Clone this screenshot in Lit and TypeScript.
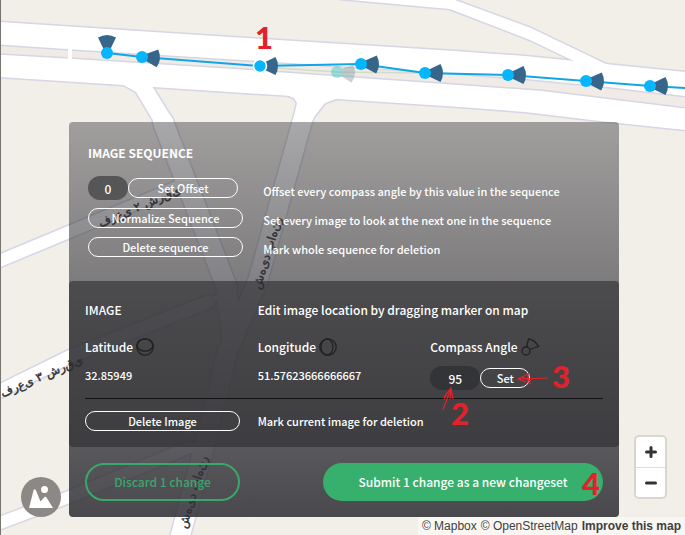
import { LitElement, html, css, svg } from "lit";
import { customElement, state } from "lit/decorators.js";

interface Shot {
  x: number;
  y: number;
  angle: number;
  active?: boolean;
}

const SHOTS: Shot[] = [
  { x: 107, y: 53, angle: 0 },
  { x: 142, y: 57, angle: 95 },
  { x: 260, y: 66, angle: 90, active: true },
  { x: 361, y: 64, angle: 92 },
  { x: 425, y: 73, angle: 90 },
  { x: 508, y: 75, angle: 90 },
  { x: 586, y: 81, angle: 92 },
  { x: 650, y: 86, angle: 90 },
];

// The map renderer lays Persian letters out one by one, left to right.
const spread = (name: string) => [...name].join("\u200c");

@customElement("street-map")
export class StreetMap extends LitElement {
  static styles = css`
    :host { display: block; }
    svg { display: block; width: 100%; height: 100%; }
    .land { fill: #f2eee8; }
    .edge { fill: none; stroke: #d6d6e4; stroke-linejoin: round; stroke-linecap: round; }
    .road { fill: none; stroke: #fff; stroke-linejoin: round; stroke-linecap: round; }
    .block { fill: #fff; stroke: #d6d6e4; stroke-width: 3; stroke-linejoin: round; }
    .inner { fill: #fff; }
    .median { fill: #f0ebe7; stroke: #d6d6e4; stroke-width: 1.5; }
    .crossing { fill: #fff; }
    .frame { fill: #77736f; }
    .track { fill: none; stroke: #12a5e6; stroke-width: 2; }
    .old-track { fill: none; stroke: #d3dcc4; stroke-width: 1.5; }
    .cone { fill: #36678a; }
    .dot { fill: #05b6fd; }
    .dot.active { stroke: #fff; stroke-width: 1.5; }
    .ghost { opacity: 0.45; }
    .ghost .dot { fill: #3bc4c4; }
    .ghost .cone { fill: #84a0a8; }
    text {
      font: 12px "DejaVu Sans", sans-serif;
      fill: #2e2e2e;
      stroke: #2e2e2e;
      stroke-width: 0.4;
      direction: ltr;
      unicode-bidi: bidi-override;
      text-anchor: middle;
    }
  `;

  private shot(s: Shot) {
    return svg`
      <g transform="translate(${s.x} ${s.y})">
        <path class="cone" transform="rotate(${s.angle})" d="M-3 -3 L-9 -15.5 Q0 -20.5 9 -15.5 L3 -3Z"/>
        <circle class="dot ${s.active ? "active" : ""}" r=${s.active ? 6.5 : 6}/>
      </g>`;
  }

  render() {
    const lanes = [
      { d: "M163 122 L226 285 L232 335", w: 20 },
      { d: "M302 122 L258 280 L228 350 L206 440 L180 537", w: 19 },
      { d: "M-8 264 L69 232 L182 185", w: 12 },
      { d: "M-8 395 L69 357 L208 302", w: 13 },
      { d: "M-8 526 L69 497 L190 447", w: 12 },
      { d: "M208 302 L226 292", w: 5 },
    ];
    const upper =
      "M0 22 L230 37 L455 51 L525 56 L685 72 V130 L600 121 L525 112 L460 107 L230 92 L0 77Z";
    const side = "M340 -1 L450 9 L530 40 L578 63 L612 67 L608 65 L531 28 L455 0 L450 -9Z";
    const flareA = "M120 83 L136 92 L154 122 L164 128 L173 120 L152 86Z";
    const flareB = "M286 95 L294 98 L297 103 L292 124 L311 124 L314 117 L325 103 L339 98Z";
    return html`
      <svg viewBox="0 0 685 535" preserveAspectRatio="xMinYMin slice" aria-hidden="true">
        <rect class="land" width="685" height="535" />
        ${lanes.map((l) => svg`<path class="edge" d=${l.d} stroke-width=${l.w + 3}/>`)}
        <path class="block" d=${upper} />
        <path class="block" d=${side} />
        <path class="block" d=${flareA} />
        <path class="block" d=${flareB} />
        ${lanes.map((l) => svg`<path class="road" d=${l.d} stroke-width=${l.w}/>`)}
        <path class="inner" d=${flareA} />
        <path class="inner" d=${flareB} />
        <path class="inner" d=${upper} />
        <path class="inner" d=${side} />
        <path
          class="median"
          d="M-2 45 L70 50 L230 60 L455 74 L530 80 L610 88 L687 97 V108 L540 90 L455 84 L230 68 L70 58 L-2 54Z"
        />
        <rect class="crossing" x="68" y="49" width="4" height="10" />
        <rect class="frame" width="1" height="535" />
        <text transform="translate(141 210) rotate(-23)">${spread("فرعی")} ${spread("۲")} ${spread("شرقی")}</text>
        <text transform="translate(43 380) rotate(-23)">${spread("فرعی")} ${spread("۳")} ${spread("شرقی")}</text>
        <text transform="translate(271 254) rotate(-73)">${spread("شهید")} ${spread("باهنر")}</text>
        <text transform="translate(197 493) rotate(-73)">${spread("شهید")} ${spread("باهنر")}</text>
        <path class="old-track" d="M261 67 L337 72 L425 73" />
        <path class="track" d=${"M" + SHOTS.map((s) => `${s.x} ${s.y}`).join("L") + "L687 88"} />
        <g class="ghost">${this.shot({ x: 337, y: 72, angle: 96 })}</g>
        ${SHOTS.map((s) => this.shot(s))}
      </svg>
    `;
  }
}

@customElement("step-notes")
export class StepNotes extends LitElement {
  static styles = css`
    :host { display: block; pointer-events: none; }
    svg { display: block; width: 100%; height: 100%; }
    text { font: 900 31px Lato, sans-serif; fill: #e2222a; }
    path { fill: none; stroke: #e2222a; stroke-width: 1.2; }
  `;

  render() {
    return html`
      <svg viewBox="0 0 685 535" preserveAspectRatio="xMinYMin slice">
        <text x="255" y="49">1</text>
        <text x="451" y="425">2</text>
        <text x="552" y="388">3</text>
        <text x="582" y="495">4</text>
        <path d="M443 410 L451 388 M444 397 L451 388 L453 399 M447 393 L444 399 M451 390 L450 399" />
        <path d="M548 378 L519 379 M530 373 L518 379 L531 384 M528 375 V382 M522 377 L531 381" />
      </svg>
    `;
  }
}

@customElement("app-root")
export class AppRoot extends LitElement {
  static styles = css`
    * { box-sizing: border-box; }
    :host {
      position: relative;
      display: flex;
      flex-direction: column;
      min-height: 100vh;
      overflow: hidden;
      color: #fff;
      font: 500 11px/20px "Noto Sans CJK SC", "Noto Sans", sans-serif;
    }
    .map, .notes { position: absolute; inset: 0; }
    .panel {
      position: relative;
      margin: 122px 66px 0 69px;
      border-radius: 4px;
      background: linear-gradient(rgba(48, 48, 54, 0.42), rgba(48, 48, 54, 0.87));
    }
    h2, p { margin: 0; font: inherit; }
    h2, .large { font-size: 12px; }
    .sequence {
      display: grid;
      grid-template-columns: 1fr 2fr;
      row-gap: 9px;
      padding: 21px 5px 24px 19px;
    }
    .sequence h2 { grid-column: 1 / -1; margin-bottom: 4px; font-weight: 700; }
    .sequence p { align-self: end; padding-top: 4px; line-height: 16px; }
    .sequence .field { margin-bottom: -1px; }
    .image {
      display: grid;
      grid-template-columns: repeat(3, 1fr);
      padding: 19px 16px 16px;
      border-radius: 4px;
      background: rgba(44, 44, 46, 0.6);
    }
    .wide { grid-column: span 2; }
    .title { display: flex; align-items: center; gap: 2px; margin-top: 17px; font-size: 12px; }
    .title svg { width: 20px; height: 20px; fill: none; stroke: #222; stroke-width: 1.3; }
    .coord { margin-top: 8px; }
    .field { display: flex; align-items: center; }
    .image .field { margin-top: 9px; }
    .rule { grid-column: 1 / -1; width: 100%; height: 1px; margin: 8px 0 12px; border: 0; background: #111; }
    button {
      padding: 0;
      border: 1px solid #fff;
      border-radius: 20px;
      background: none;
      color: inherit;
      font: inherit;
      line-height: 18px;
    }
    .short { width: 155px; height: 20px; }
    .offset { width: 110px; height: 20px; }
    .set { width: 50px; height: 20px; }
    input {
      width: 50px;
      height: 24px;
      padding: 0;
      border: 0;
      border-radius: 12px;
      background: #333438;
      color: inherit;
      font: inherit;
      font-size: 12px;
      text-align: center;
    }
    .sequence input { width: 40px; background: #575656; }
    .actions { display: flex; justify-content: space-between; padding: 16px; }
    .actions button { height: 38px; font-size: 12px; }
    .discard { width: 155px; border: 2px solid #3aa76c; color: #3aa76c; }
    .submit { width: 280px; border: 0; background: #37af6d; }
    .credits {
      position: relative;
      align-self: flex-end;
      display: flex;
      gap: 4px;
      height: 18px;
      padding: 0 4px;
      background: rgba(255, 255, 255, 0.5);
      font: 12px/19px "Liberation Sans", sans-serif;
    }
    .credits a { color: #404040; text-decoration: none; }
    .credits .improve { font-weight: 700; }
    .logo { position: absolute; left: 21px; bottom: 18px; width: 40px; height: 40px; }
    .logo svg { display: block; }
    .zoom {
      position: absolute;
      right: 18px;
      bottom: 36px;
      width: 33px;
      border: 2px solid #d9d5d0;
      border-radius: 5px;
      background: #fff;
    }
    .zoom button { display: grid; place-items: center; width: 100%; height: 30px; border: 0; border-radius: 0; }
    .zoom button + button { border-top: 1px solid #ddd; }
    .zoom svg { width: 12px; height: 12px; stroke: #333; stroke-width: 3; stroke-linecap: round; }
  `;

  @state() private offset = "0";
  @state() private angle = "95";

  render() {
    return html`
      <street-map class="map"></street-map>
      <div class="panel">
        <section class="sequence">
          <h2>IMAGE SEQUENCE</h2>
          <div class="field">
            <input aria-label="Offset" .value=${this.offset}
              @input=${(e: Event) => (this.offset = (e.target as HTMLInputElement).value)} />
            <button class="offset">Set Offset</button>
          </div>
          <p>Offset every compass angle by this value in the sequence</p>
          <button class="short">Normalize Sequence</button>
          <p>Set every image to look at the next one in the sequence</p>
          <button class="short">Delete sequence</button>
          <p>Mark whole sequence for deletion</p>
        </section>
        <section class="image">
          <h2>IMAGE</h2>
          <p class="wide large">Edit image location by dragging marker on map</p>
          <div class="title">
            Latitude
            <svg viewBox="0 0 20 20"><circle cx="10" cy="10" r="8.2" /><ellipse cx="10" cy="8" rx="8" ry="6.2" /></svg>
          </div>
          <div class="title">
            Longitude
            <svg viewBox="0 0 20 20"><circle cx="10" cy="10" r="8.2" /><ellipse cx="9" cy="10" rx="6" ry="8" /></svg>
          </div>
          <label class="title" for="angle">
            Compass Angle
            <svg viewBox="0 0 20 20"><circle cx="6" cy="14" r="4" /><path d="M6.5 10 L8.5 2 Q15 3 18.5 9.5 L9.5 12.5" /></svg>
          </label>
          <p class="coord">32.85949</p>
          <p class="coord">51.57623666666667</p>
          <div class="field">
            <input id="angle" .value=${this.angle}
              @input=${(e: Event) => (this.angle = (e.target as HTMLInputElement).value)} />
            <button class="set">Set</button>
          </div>
          <hr class="rule" />
          <button class="short">Delete Image</button>
          <p class="wide">Mark current image for deletion</p>
        </section>
        <div class="actions">
          <button class="discard">Discard 1 change</button>
          <button class="submit">Submit 1 change as a new changeset</button>
        </div>
      </div>
      <footer class="credits">
        <a href="#mapbox">© Mapbox</a>
        <a href="#osm">© OpenStreetMap</a>
        <a class="improve" href="#improve">Improve this map</a>
      </footer>
      <a class="logo" href="#home" aria-label="Home">
        <svg viewBox="0 0 40 40">
          <circle cx="20" cy="20" r="20" fill="#8b8885" />
          <circle cx="23.5" cy="12.5" r="3.5" fill="#fff" />
          <path fill="#fff" d="M8 31 L12.5 13.5 Q13.5 11 15 13.5 L19.5 24.5 L23.5 20 Q24.5 19.5 25.5 20.5 L32 31Z" />
        </svg>
      </a>
      <div class="zoom">
        <button aria-label="Zoom in"><svg viewBox="0 0 12 12"><path d="M1.5 6H10.5M6 1.5V10.5" /></svg></button>
        <button aria-label="Zoom out"><svg viewBox="0 0 12 12"><path d="M1.5 6H10.5" /></svg></button>
      </div>
      <step-notes class="notes"></step-notes>
    `;
  }
}
